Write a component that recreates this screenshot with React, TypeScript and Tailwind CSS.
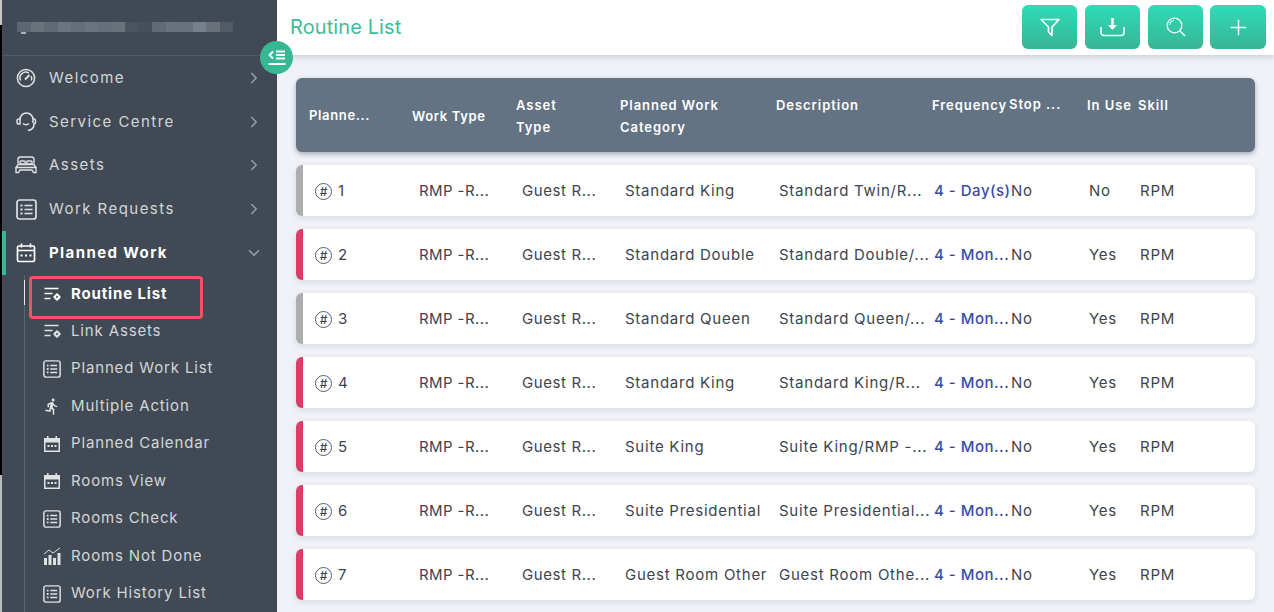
import { ReactNode } from 'react';
import { ChevronDown, ChevronRight, Plus } from 'lucide-react';
import { MdDirectionsRun } from 'react-icons/md';

interface Row {
  id: number;
  category: string;
  description: string;
  frequency: string;
  inUse: string;
  bar: string;
}

const rows: Row[] = [
  { id: 1, category: 'Standard King', description: 'Standard Twin/R...', frequency: '4 - Day(s)', inUse: 'No', bar: 'bg-[#adadad]' },
  { id: 2, category: 'Standard Double', description: 'Standard Double/...', frequency: '4 - Mon...', inUse: 'Yes', bar: 'bg-[#e03a66]' },
  { id: 3, category: 'Standard Queen', description: 'Standard Queen/...', frequency: '4 - Mon...', inUse: 'Yes', bar: 'bg-[#adadad]' },
  { id: 4, category: 'Standard King', description: 'Standard King/R...', frequency: '4 - Mon...', inUse: 'Yes', bar: 'bg-[#e03a66]' },
  { id: 5, category: 'Suite King', description: 'Suite King/RMP -...', frequency: '4 - Mon...', inUse: 'Yes', bar: 'bg-[#e03a66]' },
  { id: 6, category: 'Suite Presidential', description: 'Suite Presidential...', frequency: '4 - Mon...', inUse: 'Yes', bar: 'bg-[#e03a66]' },
  { id: 7, category: 'Guest Room Other', description: 'Guest Room Othe...', frequency: '4 - Mon...', inUse: 'Yes', bar: 'bg-[#e03a66]' },
];

const mosaic = ['#5d6771', '#6a737c', '#616a74', '#6c757e', '#656e78', '#6b747d', '#666f79', '#6a737c', '#4b545e', '#47505a', '#616a74', '#6a737d', '#66737f', '#75808a', '#6a6f7a', '#525b65'];

function GaugeIcon() {
  return (
    <svg width="20" height="20" viewBox="0 0 20 20" fill="none" stroke="currentColor" strokeWidth="1.5">
      <circle cx="10" cy="10" r="8.6" />
      <path d="M4.6 12.5a5.8 5.8 0 0 1 8.4-7.4M15.2 8a5.8 5.8 0 0 1 .2 4.5" />
      <path d="M9 11.5l4.5-4.5" strokeWidth="2" />
    </svg>
  );
}

function HeadsetIcon() {
  return (
    <svg width="21" height="21" viewBox="0 0 21 21" fill="none" stroke="currentColor" strokeWidth="1.5">
      <path d="M4 8.5a6.5 6.5 0 0 1 13 0V12" />
      <path d="M4 8H2.8A1.8 1.8 0 0 0 1 9.8v1.4A1.8 1.8 0 0 0 2.8 13H4z" />
      <path d="M17 8h1a1.8 1.8 0 0 1 1.5 1.8v1.4A1.8 1.8 0 0 1 18 13h-1" />
      <path d="M18 13c0 3.5-2.5 6-6 6.5" />
      <path d="M7 12.5c1.5 1.5 4.5 1.5 6 0" />
    </svg>
  );
}

function BedIcon() {
  return (
    <svg width="22" height="18" viewBox="0 0 22 18" fill="none" stroke="currentColor" strokeWidth="1.4">
      <path d="M3 7.5V3.2A2.2 2.2 0 0 1 5.2 1h11.6A2.2 2.2 0 0 1 19 3.2v4.3" />
      <rect x="5" y="5" width="5.2" height="3" rx="0.8" />
      <rect x="11.8" y="5" width="5.2" height="3" rx="0.8" />
      <path d="M3 8.5h16l2 3H1z" />
      <path d="M1 11.5v5h2.500l1.500-2.500h12l1.500 2.500H21v-5" />
    </svg>
  );
}

function ListBox({ size = 21 }: { size?: number }) {
  return (
    <svg width={size} height={size} viewBox="0 0 21 21" fill="none" stroke="currentColor" strokeWidth="1.7">
      <rect x="1" y="1" width="19" height="19" rx="2.5" />
      <path d="M8.5 6.5h8M8.5 10.5h8M8.5 14.5h8" />
      <path d="M4.5 6.5h2M4.5 10.5h2M4.5 14.5h2" strokeWidth="2.2" />
    </svg>
  );
}

function ListGear() {
  return (
    <svg width="17" height="14" viewBox="0 0 17 14" fill="none" stroke="currentColor" strokeWidth="1.5">
      <path d="M0.5 1.5h14M0.5 6.5h8M0.5 11.5h6" />
      <circle cx="13" cy="10" r="2" strokeWidth="2" />
      <path d="M13 6.3v1.500M13 12.200v1.500M9.300 10h1.500M15.200 10h1.500" strokeWidth="1.6" />
    </svg>
  );
}

function OutlineCalendar() {
  return (
    <svg width="20" height="20" viewBox="0 0 20 20" fill="none" stroke="currentColor" strokeWidth="1.7">
      <rect x="1.5" y="3" width="17" height="15.5" rx="1.5" />
      <path d="M1.5 7.5h17M5.500 0.500v4M14.500 0.500v4" />
      <path d="M4.500 12.500h2M9 12.500h2M13.500 12.500h2" strokeWidth="2.2" />
    </svg>
  );
}

function SolidCalendar() {
  return (
    <svg width="16" height="16" viewBox="0 0 16 16" fill="currentColor">
      <path d="M3 0h1.500v2h7V0H13v2h3v14H0V2h3z" />
      <rect x="1.5" y="6.5" width="13" height="8" fill="#414a54" />
      <path d="M3.500 9h2v2h-2zM7 9h2v2H7zM10.500 9h2v2h-2z" />
    </svg>
  );
}

function BarsUp() {
  return (
    <svg width="18" height="18" viewBox="0 0 18 18" fill="currentColor">
      <path d="M1 11h3v7H1zM5.500 8h3v10h-3zM10 11h3v7h-3zM14.500 6h3v12h-3z" />
      <path d="M1 7l5-4 4 3 7-5" fill="none" stroke="currentColor" strokeWidth="1" />
    </svg>
  );
}

function FunnelIcon() {
  return (
    <svg width="20" height="19" viewBox="0 0 20 19" fill="none" stroke="currentColor" strokeWidth="1.7" strokeLinejoin="round">
      <path d="M1 1.500h18l-7 7.500v8.500L8.500 14V9z" />
    </svg>
  );
}

function TrayDownload() {
  return (
    <svg width="25" height="20" viewBox="0 0 25 20" fill="none" stroke="currentColor" strokeWidth="1.5">
      <path d="M1 10v5.500a3 3 0 0 0 3 3h17a3 3 0 0 0 3-3V10" />
      <path d="M12.500 1v8" strokeWidth="2.4" />
      <path d="M8 8h9l-4.500 5z" fill="currentColor" stroke="none" />
    </svg>
  );
}

function LoupeIcon() {
  return (
    <svg width="20" height="20" viewBox="0 0 20 20" fill="none" stroke="currentColor" strokeWidth="1.3">
      <circle cx="8.5" cy="8.5" r="7.3" />
      <path d="M3.500 8a5 5 0 0 1 4.500-4.500" strokeWidth="1" />
      <path d="M14 14l5 5" strokeWidth="1.5" />
    </svg>
  );
}

const mainItems: { label: string; icon: ReactNode }[] = [
  { label: 'Welcome', icon: <GaugeIcon /> },
  { label: 'Service Centre', icon: <HeadsetIcon /> },
  { label: 'Assets', icon: <BedIcon /> },
  { label: 'Work Requests', icon: <ListBox /> },
];

const subItems: { label: string; icon: ReactNode }[] = [
  { label: 'Link Assets', icon: <ListGear /> },
  { label: 'Planned Work List', icon: <ListBox size={18} /> },
  { label: 'Multiple Action', icon: <MdDirectionsRun size={19} /> },
  { label: 'Planned Calendar', icon: <SolidCalendar /> },
  { label: 'Rooms View', icon: <SolidCalendar /> },
  { label: 'Rooms Check', icon: <ListBox size={18} /> },
  { label: 'Rooms Not Done', icon: <BarsUp /> },
  { label: 'Work History List', icon: <ListBox size={18} /> },
];

function Sidebar() {
  return (
    <aside className="relative flex w-[277px] shrink-0 bg-[#414a54] text-[15px] text-[#d3d6d9]">
      <div className="flex w-[2px] shrink-0 flex-col">
        <div className="h-[25px] bg-[#c9c9c9]" />
        <div className="h-[450px] bg-black" />
        <div className="flex-1 bg-[#b9bcc0]" />
      </div>
      <div className="min-w-0 flex-1">
        <div className="h-[56px] border-b border-[#525b65] pl-[15px] pt-[22px]">
          <div className="flex">
            {mosaic.map((color, i) => (
              <div key={i} className="h-[10px] w-[13.5px]" style={{ backgroundColor: color }} />
            ))}
          </div>
          <div className="ml-[4px] h-[2px] w-[5px] bg-[#aeb3b8]" />
        </div>

        <div className="pt-[0.5px]">
          {mainItems.map((item) => (
            <div key={item.label} className="flex h-[43.6px] items-center pl-[12px] pr-[14px] tracking-[1.45px]">
              <span className="flex w-[24px] justify-center text-[#dfe1e3]">{item.icon}</span>
              <span className="ml-[11px] flex-1">{item.label}</span>
              <ChevronRight size={18} className="text-[#9aa0a6]" />
            </div>
          ))}
        </div>

        <div className="flex h-[44.5px] items-center border-l-[4px] border-[#37b894] pl-[8px] pr-[14px] font-bold tracking-[1.4px] text-white">
          <span className="flex w-[24px] justify-center">
            <OutlineCalendar />
          </span>
          <span className="ml-[11px] flex-1">Planned Work</span>
          <ChevronDown size={18} className="text-[#9aa0a6]" />
        </div>

        <div className="ml-[22px] border-l border-[#5c6670] tracking-[0.85px]">
          <div className="relative flex h-[37px] items-start pl-[18px] pt-[8px] font-bold text-white">
            <div className="absolute -left-px top-[5px] h-[25px] w-px bg-[#e8e8e8]" />
            <div className="absolute left-[4px] top-[1px] h-[43px] w-[174px] rounded-[4px] border-[3px] border-[#f5516a]" />
            <span className="flex h-[22px] w-[18px] items-center justify-center"><ListGear /></span>
            <span className="ml-[10px] leading-[22px]">Routine List</span>
          </div>
          {subItems.map((item) => (
            <div key={item.label} className="flex h-[37.5px] items-center pl-[18px]">
              <span className="flex w-[18px] justify-center text-[#dfe1e3]">{item.icon}</span>
              <span className="ml-[10px]">{item.label}</span>
            </div>
          ))}
        </div>
      </div>
      <button className="absolute right-[-16px] top-[41px] z-20 flex h-[33px] w-[33px] items-center justify-center rounded-full bg-[#37b894] text-white">
        <svg width="18" height="16" viewBox="0 0 18 16" fill="none" stroke="currentColor" strokeWidth="1.8">
          <path d="M5 1.500L1.500 5 5 8.500" />
          <path d="M8 1.500h9M8 5h9M8 8.500h9M0.500 14h17" />
        </svg>
      </button>
    </aside>
  );
}

const headerColumns = 'grid grid-cols-[103px_104px_104px_156px_156px_77px_78px_51px_1fr]';
const rowColumns = 'grid grid-cols-[104px_103px_103px_154px_155px_77px_78px_51px_1fr]';

export default function App() {
  const actions = [
    <FunnelIcon key="filter" />,
    <TrayDownload key="download" />,
    <LoupeIcon key="search" />,
  ];

  return (
    <div className="flex h-[612px] w-[1274px] overflow-hidden bg-[#f1f2f8] font-['Inter',sans-serif]">
      <Sidebar />
      <main className="min-w-0 flex-1">
        <header className="flex h-[55px] items-start justify-between bg-white pl-[13px] pr-[8px] shadow-[0_2px_6px_rgba(60,64,80,0.22)]">
          <h1 className="pt-[14px] text-[20px] font-normal leading-[26px] tracking-[0.1px] text-[#3fbb9c]">Routine List</h1>
          <div className="flex gap-[7px] pt-[5px]">
            <div className="flex gap-[8px]">
              {actions.map((icon) => (
                <button
                  key={icon.key}
                  className="flex h-[44px] w-[55px] items-center justify-center rounded-[6px] bg-gradient-to-b from-[#2edcb9] to-[#37b594] text-white"
                >
                  {icon}
                </button>
              ))}
            </div>
            <button className="flex h-[44px] w-[56px] items-center justify-center rounded-[6px] bg-gradient-to-b from-[#2edcb9] to-[#37b594] text-white">
              <Plus size={25} strokeWidth={1.4} />
            </button>
          </div>
        </header>

        <div className="px-[19px] pt-[23px]">
          <div className={`${headerColumns} h-[74px] rounded-[6px] bg-[#637383] pl-[13px] pt-[17px] text-[13px] font-semibold leading-[21.5px] tracking-[0.95px] text-white shadow-[0_2px_5px_rgba(50,60,70,0.4)]`}>
            <div className="pt-[10px] tracking-[0.65px]">Planne...</div>
            <div className="pt-[11px] tracking-[0.65px]">Work Type</div>
            <div>Asset<br />Type</div>
            <div>Planned Work<br />Category</div>
            <div>Description</div>
            <div>Frequency</div>
            <div className="-mt-px">Stop ...</div>
            <div>In Use</div>
            <div>Skill</div>
          </div>

          <div className="mt-[13px] flex flex-col gap-[13px]">
            {rows.map((row) => (
              <div key={row.id} className="flex h-[51px] overflow-hidden rounded-[6px] bg-white text-[15px] tracking-[0.75px] text-[#3d4450] shadow-[0_2px_6px_rgba(60,64,80,0.14)]">
                <div className={`w-[7px] shrink-0 ${row.bar}`} />
                <div className={`${rowColumns} flex-1 items-center whitespace-nowrap pl-[12px] pt-[2px]`}>
                  <div className="flex items-center gap-[6px]">
                    <span className="flex h-[17px] w-[17px] items-center justify-center rounded-full border border-[#555c66] text-[12px] font-medium leading-none tracking-normal">#</span>
                    {row.id}
                  </div>
                  <div className="tracking-[0.4px]">RMP -R...</div>
                  <div className="tracking-[0.6px]">Guest R...</div>
                  <div>{row.category}</div>
                  <div>{row.description}</div>
                  <div className="font-medium tracking-[0.5px] text-[#3a4aa8]">{row.frequency}</div>
                  <div>No</div>
                  <div>{row.inUse}</div>
                  <div>RPM</div>
                </div>
              </div>
            ))}
          </div>
        </div>
      </main>
    </div>
  );
}
